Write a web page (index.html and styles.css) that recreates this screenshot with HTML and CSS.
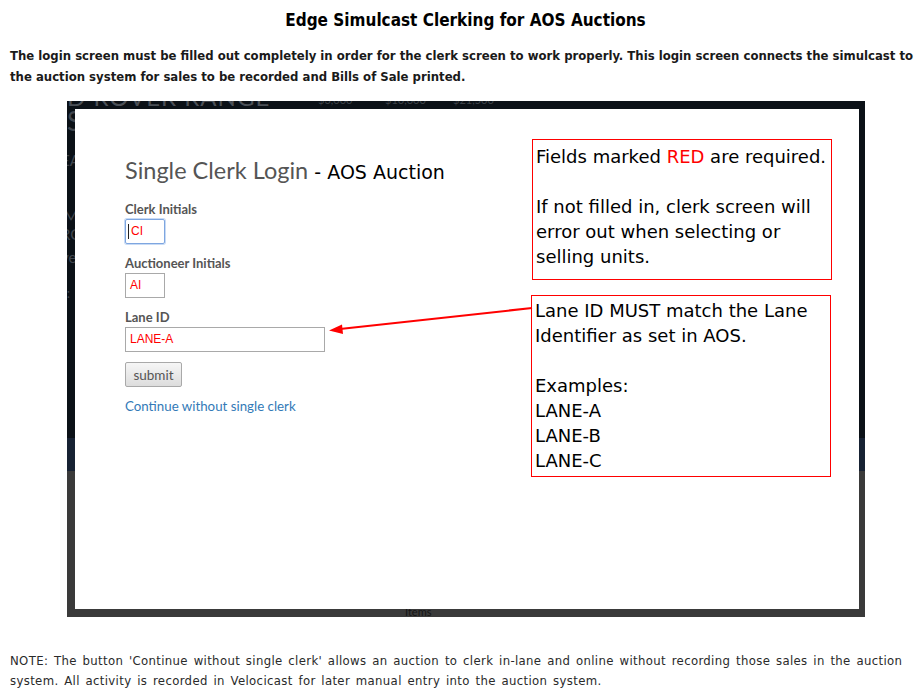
FILE: index.html
```html
<!DOCTYPE html>
<html>
<head>
<meta charset="utf-8">
<title>Edge Simulcast Clerking for AOS Auctions</title>
<link rel="stylesheet" href="styles.css">
</head>
<body>
<h1 class="title">Edge Simulcast Clerking for AOS Auctions</h1>
<p class="intro">The login screen must be filled out completely in order for the clerk screen to work properly. This login screen connects the simulcast to<br>the auction system for sales to be recorded and Bills of Sale printed.</p>

<div class="frame">
  <div class="backdrop">
    <span class="bg-title">D ROVER RANGE</span>
    <span class="bg-price p1">$3,000</span>
    <span class="bg-price p2">$10,000</span>
    <span class="bg-price p3">$21,500</span>
    <span class="bg-left l1">S</span>
    <span class="bg-left l2">EA</span>
    <span class="bg-left l3">M</span>
    <span class="bg-left l4">RC</span>
    <span class="bg-left l5">ve</span>
    <span class="bg-left l6">s:</span>
    <span class="bg-items">Items</span>
  </div>
  <div class="screen">
    <div class="login">
      <h2 class="login-title"><span class="lt-main">Single Clerk Login</span> <span class="lt-sub">- AOS Auction</span></h2>
      <label class="field-label">Clerk Initials</label>
      <div class="input small focused"><span class="caret"></span>CI</div>
      <label class="field-label">Auctioneer Initials</label>
      <div class="input small">AI</div>
      <label class="field-label">Lane ID</label>
      <div class="input wide">LANE-A</div>
      <button class="submit">submit</button>
      <a class="continue" href="#">Continue without single clerk</a>
    </div>

    <div class="note-box box1">
      <div>Fields marked <span class="red">RED</span> are required.</div>
      <div class="blank">&nbsp;</div>
      <div>If not filled in, clerk screen will</div>
      <div>error out when selecting or</div>
      <div>selling units.</div>
    </div>

    <div class="note-box box2">
      <div>Lane ID MUST match the Lane</div>
      <div>Identifier as set in AOS.</div>
      <div class="blank">&nbsp;</div>
      <div>Examples:</div>
      <div>LANE-A</div>
      <div>LANE-B</div>
      <div>LANE-C</div>
    </div>

    <svg class="arrow" width="210" height="30" viewBox="0 0 210 30">
      <line x1="206" y1="2" x2="14" y2="23" stroke="#ff0000" stroke-width="2"/>
      <polygon points="3,24.5 16,18.5 17,28" fill="#ff0000"/>
    </svg>
  </div>
</div>

<p class="footnote">NOTE: The button 'Continue without single clerk' allows an auction to clerk in-lane and online without recording those sales in the auction<br>system. All activity is recorded in Velocicast for later manual entry into the auction system.</p>
</body>
</html>
```

FILE: styles.css
```css
html, body {
  margin: 0;
  padding: 0;
  background: #ffffff;
}

body {
  width: 921px;
  height: 700px;
  overflow: hidden;
  font-family: "DejaVu Sans Condensed", "DejaVu Sans", sans-serif;
  color: #000;
}

.title {
  margin: 9px 0 0 0;
  height: 22px;
  line-height: 22px;
  text-align: center;
  font-size: 17px;
  font-weight: bold;
  padding-left: 10px;
}

.intro {
  margin: 14px 0 0 0;
  padding-left: 10px;
  font-size: 13px;
  line-height: 21px;
  font-weight: bold;
  color: #1a1a1a;
  white-space: nowrap;
}

.frame {
  position: relative;
  margin: 14px 0 0 67px;
  width: 798px;
  height: 516px;
  background: linear-gradient(to bottom, #0b1117 0px, #0b1117 337px, #172233 337px, #172233 370px, #3a3a3a 370px, #3a3a3a 100%);
  overflow: hidden;
}

.backdrop {
  position: absolute;
  inset: 0;
  font-family: "Lato", sans-serif;
}

.bg-title {
  position: absolute;
  left: 0;
  top: -19px;
  font-size: 24px;
  color: #4b5057;
  letter-spacing: 1px;
}

.bg-price {
  position: absolute;
  top: -8px;
  font-size: 11px;
  color: #3c4148;
}
.p1 { left: 251px; }
.p2 { left: 318px; }
.p3 { left: 386px; }

.bg-left {
  position: absolute;
  left: -3px;
  font-size: 15px;
  color: #40464e;
}
.l1 { top: 4px; font-size: 26px; left: 0; }
.l2 { top: 50px; left: -6px; }
.l3 { top: 106px; }
.l4 { top: 124px; left: -6px; }
.l5 { top: 147px; left: -6px; }
.l6 { top: 184px; left: -6px; font-size: 13px; }

.bg-items {
  position: absolute;
  left: 338px;
  top: 504px;
  font-size: 11px;
  color: #151515;
}

.screen {
  position: absolute;
  left: 8px;
  top: 8px;
  width: 784px;
  height: 500px;
  background: #ffffff;
}

.login {
  display: flex;
  flex-direction: column;
  align-items: flex-start;
  padding: 47px 0 0 50px;
  font-family: "Lato", "Open Sans", sans-serif;
}

.login-title {
  margin: 0 0 16px 0;
  height: 28px;
  line-height: 28px;
  font-weight: normal;
  white-space: nowrap;
}

.lt-main {
  font-size: 23.5px;
  color: #555555;
}

.lt-sub {
  font-family: "DejaVu Sans", sans-serif;
  font-size: 19px;
  color: #000;
}

.field-label {
  font-size: 13px;
  font-weight: bold;
  color: #555555;
  height: 18px;
  line-height: 18px;
  margin-bottom: 1px;
}

.input {
  box-sizing: border-box;
  height: 25px;
  border: 1px solid #a9a9a9;
  font-family: "Liberation Sans", Arial, sans-serif;
  font-size: 12px;
  color: #ff0000;
  line-height: 23px;
  padding-left: 4px;
  margin-bottom: 10px;
  display: flex;
  align-items: center;
}

.input.small { width: 40px; }
.input.wide { width: 200px; }

.input.focused {
  border: 1px solid #7ea6e0;
  box-shadow: 0 0 0 1px #c8dbf5;
  border-radius: 2px;
  padding-left: 2px;
}

.caret {
  display: inline-block;
  width: 1px;
  height: 15px;
  background: #222;
  margin-right: 2px;
}

.submit {
  box-sizing: border-box;
  width: 57px;
  height: 25px;
  border: 1px solid #a9a9a9;
  border-radius: 2px;
  background: linear-gradient(#f6f6f6, #dddddd);
  font-family: "Lato", sans-serif;
  font-size: 13.5px;
  color: #555;
  padding: 0;
  margin: 0 0 10px 0;
}

.continue {
  font-size: 13.3px;
  color: #337ab7;
  text-decoration: none;
  line-height: 18px;
}

.note-box {
  position: absolute;
  box-sizing: border-box;
  border: 1px solid #ff0000;
  background: #fff;
  font-family: "DejaVu Sans", sans-serif;
  font-size: 18px;
  line-height: 25px;
  padding: 4px 0 0 3px;
  white-space: nowrap;
}

.box1 {
  left: 457px;
  top: 30px;
  width: 300px;
  height: 141px;
}

.box2 {
  left: 456px;
  top: 186px;
  width: 300px;
  height: 182px;
  padding-top: 2px;
}

.red { color: #ff0000; }

.arrow {
  position: absolute;
  left: 251px;
  top: 197px;
}

.footnote {
  margin: 34px 0 0 0;
  padding-left: 10px;
  font-size: 13px;
  line-height: 20px;
  letter-spacing: 0.35px;
  word-spacing: 1.7px;
  color: #2a2a2a;
  white-space: nowrap;
}
```
